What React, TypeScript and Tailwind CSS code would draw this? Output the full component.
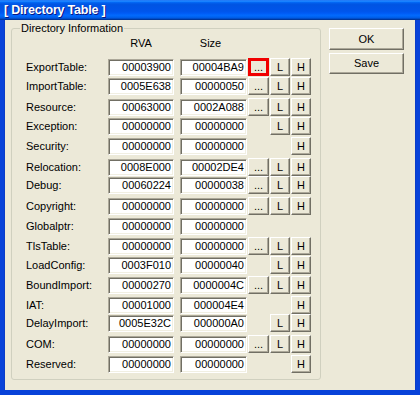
import React from 'react';

type Row = {
    name: string;
    rva: string;
    size: string;
    dots?: boolean;
    l?: boolean;
    h?: boolean;
    hot?: boolean;
};

const rows: Row[] = [
    { name: 'ExportTable', rva: '00003900', size: '00004BA9', dots: true, l: true, h: true, hot: true },
    { name: 'ImportTable', rva: '0005E638', size: '00000050', dots: true, l: true, h: true },
    { name: 'Resource', rva: '00063000', size: '0002A088', dots: true, l: true, h: true },
    { name: 'Exception', rva: '00000000', size: '00000000', l: true, h: true },
    { name: 'Security', rva: '00000000', size: '00000000', h: true },
    { name: 'Relocation', rva: '0008E000', size: '00002DE4', dots: true, l: true, h: true },
    { name: 'Debug', rva: '00060224', size: '00000038', dots: true, l: true, h: true },
    { name: 'Copyright', rva: '00000000', size: '00000000', dots: true, l: true, h: true },
    { name: 'Globalptr', rva: '00000000', size: '00000000' },
    { name: 'TlsTable', rva: '00000000', size: '00000000', dots: true, l: true, h: true },
    { name: 'LoadConfig', rva: '0003F010', size: '00000040', l: true, h: true },
    { name: 'BoundImport', rva: '00000270', size: '0000004C', dots: true, l: true, h: true },
    { name: 'IAT', rva: '00001000', size: '000004E4', h: true },
    { name: 'DelayImport', rva: '0005E32C', size: '000000A0', l: true, h: true },
    { name: 'COM', rva: '00000000', size: '00000000', dots: true, l: true, h: true },
    { name: 'Reserved', rva: '00000000', size: '00000000', h: true },
];

// classic raised 3D button face
const raised =
    'bg-[#ECE9D8] border border-t-white border-l-white border-r-[#716F64] border-b-[#716F64] shadow-[inset_-1px_-1px_0_#ACA899] text-black leading-none flex items-center justify-center';

// sunken edit box
const sunken =
    'h-[17px] bg-white border border-t-[#ACA899] border-l-[#ACA899] border-r-white border-b-white shadow-[inset_1px_1px_0_#716F64,inset_-1px_-1px_0_#F1EFE2] text-right pr-[2px] leading-[15px]';

const SmallButton: React.FC<{ show?: boolean; hot?: boolean; width: string; children: React.ReactNode }> = ({ show, hot, width, children }) => {
    if (!show) return <div className={`${width} h-[18px] shrink-0`} />;
    if (hot) {
        return (
            <div className={`${width} h-[18px] shrink-0 border-[3px] border-[#F00000] bg-[#ECE9D8] flex items-center justify-center leading-none`}>
                {children}
            </div>
        );
    }
    return <div className={`${width} h-[18px] shrink-0 ${raised}`}>{children}</div>;
};

const App: React.FC = () => {
    return (
        <div
            className="w-[420px] h-[395px] flex flex-col bg-[#0842D9] overflow-hidden text-[11px] text-black"
            style={{ fontFamily: '"Liberation Sans", Arial, sans-serif' }}
        >
            {/* Title bar */}
            <div className="h-[20px] shrink-0 flex items-center pl-[4px] bg-[linear-gradient(180deg,#0058ee_0%,#3593ff_4%,#288eff_6%,#127dff_8%,#036ffc_10%,#0262ee_14%,#0057e5_20%,#0054e3_24%,#0055eb_56%,#005bf5_66%,#026afe_76%,#0062ef_86%,#0052d6_92%,#0040ab_94%,#003092_100%)]">
                <span className="text-white font-bold text-[12.5px] tracking-[-0.2px] [text-shadow:1px_1px_0_#0A1883]">[ Directory Table ]</span>
            </div>

            {/* Client area */}
            <div className="mx-[4px] mb-[5px] flex-1 bg-[#ECE9D8] border-l border-r border-[#0A3CC8] flex items-start pl-[6px] pt-[2px]">
                <fieldset className="w-[310px] border border-[#D0D0BF] rounded-[3px] pb-[4px]">
                    <legend className="ml-[8px] px-[1px] leading-[13px]">Directory Information</legend>

                    <div className="flex pl-[14px] mt-[2px] leading-[13px]">
                        <div className="w-[82px]" />
                        <div className="w-[66px] text-center">RVA</div>
                        <div className="w-[67px] ml-[6px] text-center pr-[6px]">Size</div>
                    </div>

                    <div className="mt-[8px] pl-[14px] grid grid-rows-[19px_21px_19px_20px_21px_18px_21px_20px_20px_19px_20px_20px_18px_21px_20px_20px]">
                        {rows.map(row => (
                            <div key={row.name} className="flex items-start">
                                <div className="w-[82px] shrink-0 mt-[1px] leading-[17px]">{row.name}:</div>
                                <div className={`w-[66px] shrink-0 mt-[1px] ${sunken}`}>{row.rva}</div>
                                <div className={`w-[67px] shrink-0 mt-[1px] ml-[6px] ${sunken}`}>{row.size}</div>
                                <div className="ml-[1px] flex gap-[1px]">
                                    <SmallButton show={row.dots} hot={row.hot} width="w-[21px]">...</SmallButton>
                                    <SmallButton show={row.l} width="w-[20px]">L</SmallButton>
                                    <SmallButton show={row.h} width="w-[20px]">H</SmallButton>
                                </div>
                            </div>
                        ))}
                    </div>
                </fieldset>

                <div className="ml-[8px] mt-[6px] flex flex-col gap-[3px]">
                    <div className={`w-[75px] h-[22px] ${raised}`}>OK</div>
                    <div className={`w-[75px] h-[21px] ${raised}`}>Save</div>
                </div>
            </div>
        </div>
    );
};

export default App;
